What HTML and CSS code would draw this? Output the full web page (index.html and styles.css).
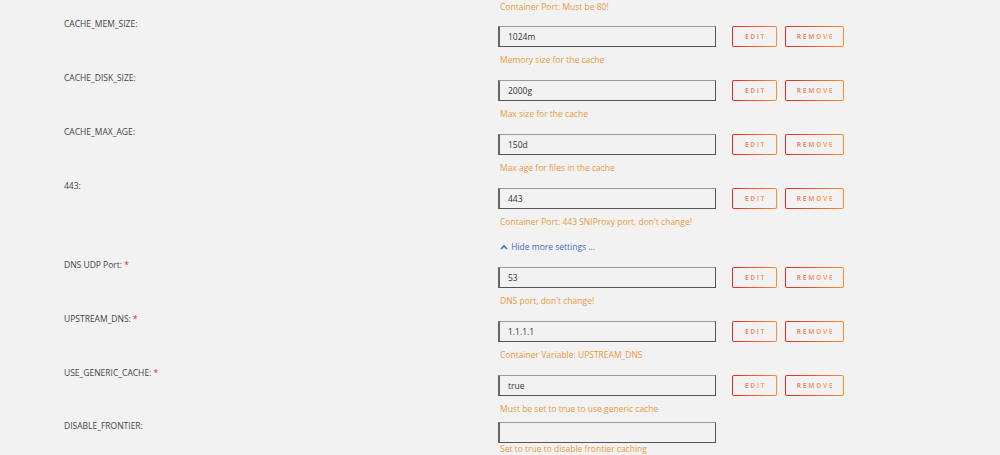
FILE: index.html
```html
<!DOCTYPE html>
<html lang="en">
<head>
    <meta charset="UTF-8">
    <meta name="viewport" content="width=device-width, initial-scale=1.0">
    <title>Container Settings</title>
    <link rel="stylesheet" href="styles.css">
</head>
<body>
    <div id="settings">
        <div class="row top">
            <div class="label"></div>
            <div class="field">
                <div class="desc">Container Port: Must be 80!</div>
            </div>
        </div>

        <div class="row">
            <div class="label">CACHE_MEM_SIZE:</div>
            <div class="field">
                <div class="line has-btn">
                    <input type="text" value="1024m">
                    <button class="btn edit"><span class="face"><span class="txt">EDIT</span></span></button>
                    <button class="btn remove"><span class="face"><span class="txt">REMOVE</span></span></button>
                </div>
                <div class="desc">Memory size for the cache</div>
            </div>
        </div>

        <div class="row">
            <div class="label">CACHE_DISK_SIZE:</div>
            <div class="field">
                <div class="line has-btn">
                    <input type="text" value="2000g">
                    <button class="btn edit"><span class="face"><span class="txt">EDIT</span></span></button>
                    <button class="btn remove"><span class="face"><span class="txt">REMOVE</span></span></button>
                </div>
                <div class="desc">Max size for the cache</div>
            </div>
        </div>

        <div class="row">
            <div class="label">CACHE_MAX_AGE:</div>
            <div class="field">
                <div class="line has-btn">
                    <input type="text" value="150d">
                    <button class="btn edit"><span class="face"><span class="txt">EDIT</span></span></button>
                    <button class="btn remove"><span class="face"><span class="txt">REMOVE</span></span></button>
                </div>
                <div class="desc">Max age for files in the cache</div>
            </div>
        </div>

        <div class="row">
            <div class="label">443:</div>
            <div class="field">
                <div class="line has-btn">
                    <input type="text" value="443">
                    <button class="btn edit"><span class="face"><span class="txt">EDIT</span></span></button>
                    <button class="btn remove"><span class="face"><span class="txt">REMOVE</span></span></button>
                </div>
                <div class="desc">Container Port: 443 SNIProxy port, don't change!</div>
            </div>
        </div>

        <div class="row toggle">
            <div class="label"></div>
            <div class="field">
                <a class="more-link" href="#">
                    <svg width="8" height="6" viewBox="0 0 8 6"><path d="M1 5 L4 2 L7 5" fill="none" stroke="#486dba" stroke-width="1.6"/></svg>
                    Hide more settings ...
                </a>
            </div>
        </div>

        <div class="row">
            <div class="label">DNS UDP Port: <span class="req">*</span></div>
            <div class="field">
                <div class="line has-btn">
                    <input type="text" value="53">
                    <button class="btn edit"><span class="face"><span class="txt">EDIT</span></span></button>
                    <button class="btn remove"><span class="face"><span class="txt">REMOVE</span></span></button>
                </div>
                <div class="desc">DNS port, don't change!</div>
            </div>
        </div>

        <div class="row">
            <div class="label">UPSTREAM_DNS: <span class="req">*</span></div>
            <div class="field">
                <div class="line has-btn">
                    <input type="text" value="1.1.1.1">
                    <button class="btn edit"><span class="face"><span class="txt">EDIT</span></span></button>
                    <button class="btn remove"><span class="face"><span class="txt">REMOVE</span></span></button>
                </div>
                <div class="desc">Container Variable: UPSTREAM_DNS</div>
            </div>
        </div>

        <div class="row tight">
            <div class="label">USE_GENERIC_CACHE: <span class="req">*</span></div>
            <div class="field">
                <div class="line has-btn">
                    <input type="text" value="true">
                    <button class="btn edit"><span class="face"><span class="txt">EDIT</span></span></button>
                    <button class="btn remove"><span class="face"><span class="txt">REMOVE</span></span></button>
                </div>
                <div class="desc">Must be set to true to use generic cache</div>
            </div>
        </div>

        <div class="row">
            <div class="label">DISABLE_FRONTIER:</div>
            <div class="field">
                <div class="line">
                    <input type="text" value="">
                </div>
                <div class="desc">Set to true to disable frontier caching</div>
            </div>
        </div>
    </div>
</body>
</html>
```

FILE: styles.css
```css
body {
    font-family: 'Open Sans', 'Noto Sans', sans-serif;
    font-size: 8.5px;
    background-color: #f2f2f2;
    color: #444;
    margin: 0;
    padding: 0;
}

#settings {
    padding-left: 64px;
}

.row {
    display: grid;
    grid-template-columns: 434px 1fr;
    margin-bottom: 5px;
}

.row.top {
    margin-bottom: 4px;
}

.row.top .field {
    padding-top: 1px;
}

.row.tight {
    margin-bottom: 4px;
}

.label {
    line-height: 14px;
    white-space: nowrap;
}

.req {
    color: #e22828;
}

.field {
    padding-top: 3px;
}

.line {
    display: flex;
    align-items: center;
}

.line.has-btn {
    padding: 6px 0 7px 0;
}

input[type=text] {
    box-sizing: border-box;
    width: 218px;
    height: 21px;
    margin: 0;
    padding: 0 8px;
    font-family: 'Open Sans', 'Noto Sans', sans-serif;
    font-size: 8.5px;
    color: #333;
    background-color: #f2f2f2;
    border: 1px solid #555;
    border-top-color: #9a9a9a;
    border-left: 2px solid #666;
    outline: none;
}

/* gradient outline: outer gradient, inner face painted over it */
.btn {
    box-sizing: border-box;
    height: 21px;
    margin: 0 0 0 16px;
    padding: 1px;
    border: none;
    border-radius: 2px;
    background: linear-gradient(90deg, #e22828 0, #ff8c2f);
    cursor: pointer;
}

.btn .face {
    display: flex;
    align-items: center;
    justify-content: center;
    height: 100%;
    padding-left: 2px;
    box-sizing: border-box;
    background-color: #f2f2f2;
    border-radius: 1px;
}

.btn .txt {
    font-family: 'Open Sans', 'Noto Sans', sans-serif;
    font-size: 6.5px;
    font-weight: bold;
    letter-spacing: 1.7px;
    background: linear-gradient(90deg, #f07a6a 0, #ffaa60);
    -webkit-background-clip: text;
    background-clip: text;
    color: transparent;
}

.btn.edit {
    width: 45px;
}

.btn.remove {
    width: 59px;
    margin-left: 8px;
}

.desc {
    color: #eb9a3c;
    line-height: 12px;
    padding-left: 2px;
}

.row.toggle {
    margin-bottom: 0;
}

.row.toggle .field {
    padding: 7px 0 4px 2px;
}

.more-link {
    color: #486dba;
    text-decoration: none;
    line-height: 14px;
}

.more-link svg {
    margin-right: 1px;
}
```
